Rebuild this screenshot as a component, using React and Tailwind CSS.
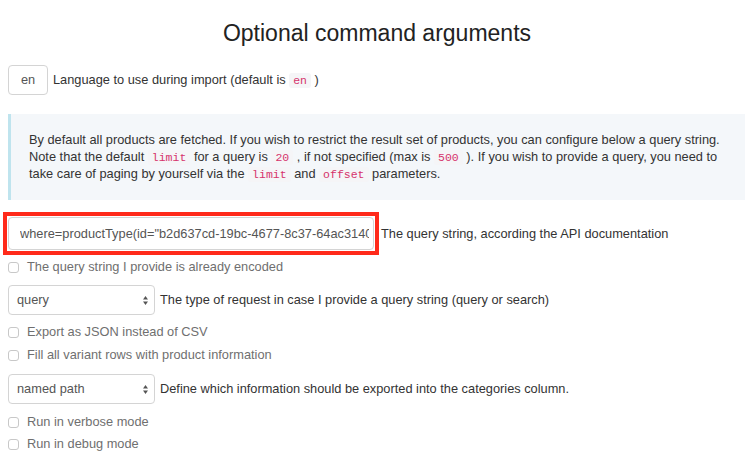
import React from 'react';

const Code = ({ children }) => (
  <code className="inline-block px-[4px] leading-[15px] rounded-[3px] bg-[#f5f5f7] text-[#d6336c] text-[11.5px] font-['Liberation_Mono',monospace]">
    {children}
  </code>
);

const Checkbox = ({ label, className = '' }) => (
  <label className={`flex items-center h-[18px] text-[12.8px] text-[#6f6f6f] ${className}`}>
    <span className="w-[11px] h-[11px] rounded-[3px] border border-[#c8c8c8] bg-white" />
    <span className="ml-[8px]">{label}</span>
  </label>
);

const Select = ({ value }) => (
  <div className="relative w-[147px] h-[30px] rounded-[4px] border border-[#d4d4d4] bg-white flex items-center pl-[8px] text-[12.8px] text-[#555]">
    {value}
    <svg className="absolute right-[5px] top-[9px]" width="7" height="11" viewBox="0 0 7 11">
      <path d="M3.5 1 L6 4.5 H1 Z" fill="#555" />
      <path d="M3.5 10 L6 6.5 H1 Z" fill="#555" />
    </svg>
  </div>
);

export default function App() {
  return (
    <div className="w-[754px] h-[468px] bg-white font-['Liberation_Sans',Arial,sans-serif] text-[#333] overflow-hidden">
      <h1 className="pt-[18px] text-center text-[23px] leading-[30px] text-[#222]">
        Optional command arguments
      </h1>

      <div className="px-[8px]">
        <div className="mt-[17px] flex items-center">
          <div className="w-[40px] h-[30px] rounded-[4px] border border-[#d4d4d4] flex items-center justify-center text-[12.8px] text-[#555]">
            en
          </div>
          <span className="ml-[5px] text-[12.8px]">
            Language to use during import (default is <Code>en</Code> )
          </span>
        </div>

        <div className="mt-[19px] w-[737px] bg-[#f4f7fa] border-l-[3px] border-[#bfe4ee] pl-[18px] pr-[10px] pt-[17px] pb-[18px] text-[12.8px] leading-[17px]">
          By default all products are fetched. If you wish to restrict the result set of products, you can configure below a query string.
          Note that the default <Code>limit</Code> for a query is <Code>20</Code> , if not specified (max is <Code>500</Code> ). If you wish to provide a query, you need to
          take care of paging by yourself via the <Code>limit</Code> and <Code>offset</Code> parameters.
        </div>

        <div className="mt-[12px] -ml-[5px] flex items-center">
          <div className="border-[4px] border-[#ff2a1a] p-[1px]">
            <input
              readOnly
              value={'where=productType(id="b2d637cd-19bc-4677-8c37-64ac31403d4a")'}
              className="w-[366px] h-[33px] rounded-[4px] border border-[#d4d4d4] pl-[11px] pr-[4px] text-[12.8px] text-[#555] outline-none bg-white"
            />
          </div>
          <span className="ml-[2px] text-[12.8px]">The query string, according the API documentation</span>
        </div>

        <Checkbox className="mt-[3px]" label="The query string I provide is already encoded" />

        <div className="mt-[9px] flex items-center">
          <Select value="query" />
          <span className="ml-[5px] text-[12.8px]">The type of request in case I provide a query string (query or search)</span>
        </div>

        <Checkbox className="mt-[8px]" label="Export as JSON instead of CSV" />
        <Checkbox className="mt-[5px]" label="Fill all variant rows with product information" />

        <div className="mt-[10px] flex items-center">
          <Select value="named path" />
          <span className="ml-[5px] text-[12.8px]">Define which information should be exported into the categories column.</span>
        </div>

        <Checkbox className="mt-[9px]" label="Run in verbose mode" />
        <Checkbox className="mt-[4px]" label="Run in debug mode" />
      </div>
    </div>
  );
}
